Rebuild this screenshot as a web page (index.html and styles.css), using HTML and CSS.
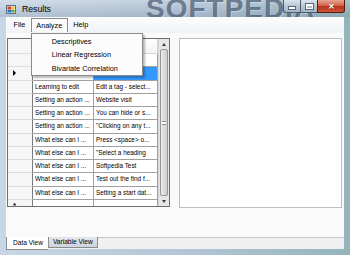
FILE: index.html
```html
<!DOCTYPE html>
<html lang="en">
<head>
  <meta charset="UTF-8">
  <title>Results</title>
  <link rel="stylesheet" href="styles.css">
</head>
<body>
  <div class="window">
    <div class="titlebar">
      <svg class="app-icon" viewBox="0 0 10 10" width="10" height="10">
        <rect x="0.5" y="1.5" width="9" height="8" fill="#eef2f6" stroke="#5a6f88" stroke-width="1"/>
        <rect x="1.5" y="2.5" width="3.5" height="3" fill="#d9412b"/>
        <rect x="5.2" y="2.5" width="3.3" height="3" fill="#f2c230"/>
        <rect x="1.5" y="5.8" width="3.5" height="2.7" fill="#2f6fc9"/>
        <rect x="5.2" y="5.8" width="3.3" height="2.7" fill="#59a83c"/>
      </svg>
      <span class="title">Results</span>
      <span class="watermark">SOFTPEDIA</span>
      <div class="controls">
        <span class="ctl ctl-min"><i></i></span>
        <span class="ctl ctl-max"><i></i></span>
        <span class="ctl ctl-close">&#x2715;</span>
      </div>
    </div>

    <div class="client">
      <div class="menubar">
        <span class="menu-item">File</span>
        <span class="menu-item open">Analyze
          <div class="dropdown">
            <div class="drop-item">Descriptives</div>
            <div class="drop-item">Linear Regression</div>
            <div class="drop-item">Bivariate Correlation</div>
          </div>
        </span>
        <span class="menu-item">Help</span>
      </div>

      <div class="panes">
        <div class="grid">
          <div class="table">
            <div class="row head">
              <div class="cell rh"></div>
              <div class="cell"></div>
              <div class="cell"></div>
            </div>
            <div class="row">
              <div class="cell rh"></div>
              <div class="cell"></div>
              <div class="cell"></div>
            </div>
            <div class="row">
              <div class="cell rh"><span class="current"></span></div>
              <div class="cell"></div>
              <div class="cell selected"></div>
            </div>
            <div class="row">
              <div class="cell rh"></div>
              <div class="cell">Learning to edit</div>
              <div class="cell">Edit a tag - select...</div>
            </div>
            <div class="row">
              <div class="cell rh"></div>
              <div class="cell">Setting an action ...</div>
              <div class="cell">Website visit</div>
            </div>
            <div class="row">
              <div class="cell rh"></div>
              <div class="cell">Setting an action ...</div>
              <div class="cell">You can hide or s...</div>
            </div>
            <div class="row">
              <div class="cell rh"></div>
              <div class="cell">Setting an action ...</div>
              <div class="cell">"Clicking on any t...</div>
            </div>
            <div class="row">
              <div class="cell rh"></div>
              <div class="cell">What else can I ...</div>
              <div class="cell">Press &lt;space&gt; o...</div>
            </div>
            <div class="row">
              <div class="cell rh"></div>
              <div class="cell">What else can I ...</div>
              <div class="cell">"Select a heading</div>
            </div>
            <div class="row">
              <div class="cell rh"></div>
              <div class="cell">What else can I ...</div>
              <div class="cell">Softpedia Test</div>
            </div>
            <div class="row">
              <div class="cell rh"></div>
              <div class="cell">What else can I ...</div>
              <div class="cell">Test out the find f...</div>
            </div>
            <div class="row">
              <div class="cell rh"></div>
              <div class="cell">What else can I ...</div>
              <div class="cell">Setting a start dat...</div>
            </div>
            <div class="row">
              <div class="cell rh new-row">*</div>
              <div class="cell"></div>
              <div class="cell"></div>
            </div>
          </div>
          <div class="vscroll">
            <div class="arrow"><span class="tri-up"></span></div>
            <div class="thumb"><span class="grip"></span></div>
            <div class="arrow"><span class="tri-down"></span></div>
          </div>
        </div>
        <div class="chart"></div>
      </div>

      <div class="tabs">
        <span class="tab active">Data View</span>
        <span class="tab">Variable View</span>
      </div>
    </div>
  </div>
</body>
</html>
```

FILE: styles.css
```css
* {
  box-sizing: border-box;
}
body {
  margin: 0;
  width: 350px;
  height: 255px;
  overflow: hidden;
  font-family: "Liberation Sans", Arial, sans-serif;
}
.window {
  position: relative;
  width: 350px;
  height: 255px;
  display: flex;
  flex-direction: column;
  overflow: hidden;
  background: linear-gradient(90deg, #c8d7e5 0%, #b2c4d6 55%, #93b5ba 100%);
}

/* title bar */
.titlebar {
  position: relative;
  height: 17px;
  flex-shrink: 0;
  display: flex;
  align-items: center;
  padding-left: 6px;
  background: linear-gradient(180deg, rgba(255,255,255,0.2), rgba(110,130,155,0.25));
}
.app-icon {
  display: block;
}
.title {
  position: relative;
  z-index: 1;
  margin-left: 6px;
  font-size: 8.7px;
  color: #000;
}
.watermark {
  position: absolute;
  left: 146px;
  top: -7px;
  font-size: 28px;
  font-weight: bold;
  letter-spacing: 1px;
  color: rgba(48, 64, 90, 0.62);
  text-shadow: 1px 1px 0 rgba(235, 242, 250, 0.35);
}
.controls {
  position: absolute;
  right: 5px;
  top: 0;
  display: flex;
}
.ctl {
  height: 13px;
  border: 1px solid #4f5d6d;
  border-top: none;
  display: flex;
  align-items: center;
  justify-content: center;
  background: linear-gradient(180deg, #dce5ee 0%, #b9c7d5 50%, #a4b5c6 100%);
}
.ctl-min {
  width: 17px;
  border-radius: 0 0 0 3px;
  border-right: none;
}
.ctl-min i {
  width: 6px;
  height: 2px;
  margin-top: 4px;
  background: #fff;
  box-shadow: 0 0 0 1px #55657a;
}
.ctl-max {
  width: 17px;
  border-right: none;
}
.ctl-max i {
  width: 7px;
  height: 5px;
  border: 1px solid #fff;
  border-top-width: 2px;
  box-shadow: 0 0 0 1px #55657a;
}
.ctl-close {
  width: 28px;
  border-radius: 0 0 3px 0;
  border-color: #5a1c12;
  background: linear-gradient(180deg, #e8a594 0%, #d4644a 45%, #b7341a 55%, #c9553a 100%);
  color: #fff;
  font-size: 8px;
  font-weight: bold;
  text-shadow: 0 0 1px #5a1c12;
}

/* client area */
.client {
  flex: 1;
  margin: 0 6px 6px;
  display: flex;
  flex-direction: column;
  background: #fafafa;
}
.menubar {
  position: relative;
  height: 16px;
  flex-shrink: 0;
  display: flex;
  padding: 1px 0 0 2px;
  font-size: 7.3px;
  background: linear-gradient(180deg, #fdfdfe, #f0f2f5);
  z-index: 2;
}
.menu-item {
  position: relative;
  height: 14px;
  line-height: 14px;
  padding: 0 5.5px;
  color: #000;
}
.menu-item.open {
  background: #fbfbfb;
  border: 1px solid #8b8b8b;
  border-bottom: none;
  line-height: 13px;
  padding: 0 4.5px;
}
.dropdown {
  position: absolute;
  left: -1px;
  top: 14px;
  width: 112px;
  height: 43px;
  padding-top: 1px;
  background: #fcfcfc;
  border: 1px solid #8b8b8b;
  box-shadow: 2px 2px 2px rgba(0, 0, 0, 0.28);
}
.drop-item {
  height: 13.3px;
  line-height: 13.3px;
  padding-left: 20px;
  white-space: nowrap;
}

.panes {
  display: flex;
  gap: 9px;
  padding: 5px 0 0 1px;
}

/* data grid */
.grid {
  width: 163px;
  height: 169px;
  display: flex;
  border: 1px solid #6e6e6e;
  background: #fff;
  overflow: hidden;
}
.table {
  width: 150px;
}
.row {
  display: grid;
  grid-template-columns: 25px 61px 64px;
  height: 13.25px;
  font-size: 6.4px;
}
.row.head {
  height: 15px;
  background: linear-gradient(180deg, #ffffff, #f1f2f4);
}
.cell {
  padding-left: 2px;
  line-height: 12.25px;
  white-space: nowrap;
  overflow: hidden;
  color: #000;
  border-right: 1px solid #a0a0a0;
  border-bottom: 1px solid #a0a0a0;
}
.head .cell {
  border-color: #d5d5d5;
}
.cell.rh {
  position: relative;
  background: #f6f6f6;
  border-right-color: #7a7a7a;
  border-bottom-color: #dedede;
}
.cell.selected {
  background: #3399ff;
}
.current {
  position: absolute;
  left: 5px;
  top: 3px;
  border-left: 3px solid #000;
  border-top: 3px solid transparent;
  border-bottom: 3px solid transparent;
}
.new-row {
  font-size: 8px;
  font-weight: bold;
  padding-left: 5px;
  line-height: 11px;
}

.vscroll {
  width: 11px;
  display: flex;
  flex-direction: column;
  background: #e6e6e6;
  border-left: 1px solid #d6d6d6;
}
.arrow {
  height: 10px;
  display: flex;
  align-items: center;
  justify-content: center;
}
.tri-up {
  border-bottom: 3px solid #3c3c3c;
  border-left: 2px solid transparent;
  border-right: 2px solid transparent;
}
.tri-down {
  border-top: 3px solid #3c3c3c;
  border-left: 2px solid transparent;
  border-right: 2px solid transparent;
}
.thumb {
  flex: 1;
  margin: 0 1px;
  display: flex;
  align-items: center;
  justify-content: center;
  border: 1px solid #979797;
  border-radius: 2px;
  background: linear-gradient(90deg, #ececec, #cdcdcd);
}
.grip {
  width: 4px;
  height: 4px;
  border-top: 1px solid #8a8a8a;
  border-bottom: 1px solid #8a8a8a;
  background: linear-gradient(#fff 33%, #8a8a8a 33%, #8a8a8a 66%, #fff 66%);
}

.chart {
  width: 163px;
  height: 170px;
  border: 1px solid #b9bec4;
  background: #fff;
}

/* bottom tabs */
.tabs {
  margin-top: auto;
  height: 12px;
  display: flex;
  align-items: flex-start;
  border-top: 1px solid #c4c4c4;
  background: #f0f0f0;
  font-size: 6.6px;
}
.tab {
  height: 11px;
  line-height: 10px;
  padding: 0 4px;
  margin-top: -1px;
  border: 1px solid #8c8c8c;
  border-top: none;
  background: linear-gradient(180deg, #e2e6ee, #ccd3df);
  color: #000;
}
.tab.active {
  height: 13px;
  line-height: 12px;
  padding: 0 5px 0 6px;
  background: #fff;
  border-right: none;
}
```
